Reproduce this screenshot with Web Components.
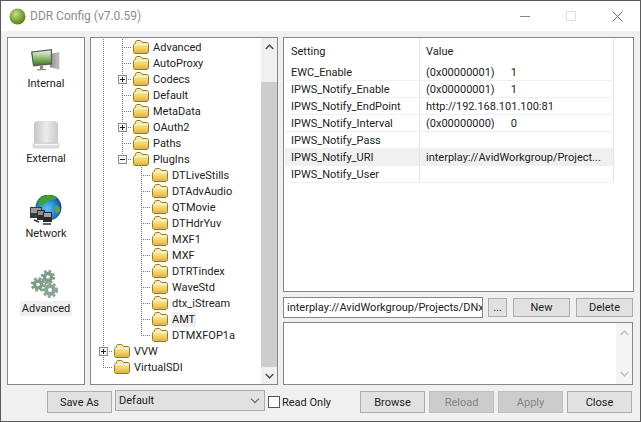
<!DOCTYPE html>
<html>
<head>
<meta charset="utf-8">
<title>DDR Config</title>
<style>
html, body{ margin: 0; padding: 0; background: #5a5a5a; }
body{ font: 11px Roboto, "Noto Sans", sans-serif; color: #222; }
</style>
</head>
<body>
<ddr-window>
	<ddr-titlebar slot="title" text="DDR Config (v7.0.59)"></ddr-titlebar>

	<ddr-panel slot="nav" style="width:78px">
		<ddr-nav>
			<ddr-nav-item label="Internal" icon="internal"></ddr-nav-item>
			<ddr-nav-item label="External" icon="external"></ddr-nav-item>
			<ddr-nav-item label="Network" icon="network"></ddr-nav-item>
			<ddr-nav-item label="Advanced" icon="advanced" selected></ddr-nav-item>
		</ddr-nav>
	</ddr-panel>

	<ddr-panel slot="tree" style="width:188px">
		<ddr-tree>
			<ddr-tree-row guides="v t" label="Advanced"></ddr-tree-row>
			<ddr-tree-row guides="v t" label="AutoProxy"></ddr-tree-row>
			<ddr-tree-row guides="v t" expander="plus" label="Codecs"></ddr-tree-row>
			<ddr-tree-row guides="v t" label="Default"></ddr-tree-row>
			<ddr-tree-row guides="v t" label="MetaData"></ddr-tree-row>
			<ddr-tree-row guides="v t" expander="plus" label="OAuth2"></ddr-tree-row>
			<ddr-tree-row guides="v t" label="Paths"></ddr-tree-row>
			<ddr-tree-row guides="v l" expander="minus" label="PlugIns"></ddr-tree-row>
			<ddr-tree-row guides="v _ t" label="DTLiveStills"></ddr-tree-row>
			<ddr-tree-row guides="v _ t" label="DTAdvAudio"></ddr-tree-row>
			<ddr-tree-row guides="v _ t" label="QTMovie"></ddr-tree-row>
			<ddr-tree-row guides="v _ t" label="DTHdrYuv"></ddr-tree-row>
			<ddr-tree-row guides="v _ t" label="MXF1"></ddr-tree-row>
			<ddr-tree-row guides="v _ t" label="MXF"></ddr-tree-row>
			<ddr-tree-row guides="v _ t" label="DTRTindex"></ddr-tree-row>
			<ddr-tree-row guides="v _ t" label="WaveStd"></ddr-tree-row>
			<ddr-tree-row guides="v _ t" label="dtx_iStream"></ddr-tree-row>
			<ddr-tree-row guides="v _ t" label="AMT" selected></ddr-tree-row>
			<ddr-tree-row guides="v _ l" label="DTMXFOP1a"></ddr-tree-row>
			<ddr-tree-row guides="t" expander="plus" label="VVW"></ddr-tree-row>
			<ddr-tree-row guides="l" label="VirtualSDI"></ddr-tree-row>
		</ddr-tree>
		<ddr-scrollbar top="27"></ddr-scrollbar>
	</ddr-panel>

	<ddr-settings slot="settings">
		<ddr-panel style="height:255px">
			<ddr-list>
				<ddr-list-row header name="Setting" value="Value"></ddr-list-row>
				<ddr-list-row name="EWC_Enable" value="(0x00000001)" extra="1"></ddr-list-row>
				<ddr-list-row name="IPWS_Notify_Enable" value="(0x00000001)" extra="1"></ddr-list-row>
				<ddr-list-row name="IPWS_Notify_EndPoint" value="http://192.168.101.100:81"></ddr-list-row>
				<ddr-list-row name="IPWS_Notify_Interval" value="(0x00000000)" extra="0"></ddr-list-row>
				<ddr-list-row name="IPWS_Notify_Pass" value=""></ddr-list-row>
				<ddr-list-row selected name="IPWS_Notify_URI" value="interplay://AvidWorkgroup/Project..."></ddr-list-row>
				<ddr-list-row name="IPWS_Notify_User" value=""></ddr-list-row>
			</ddr-list>
		</ddr-panel>
		<ddr-edit-row text="interplay://AvidWorkgroup/Projects/DNx">
			<ddr-button style="width:19px;height:19px;margin-left:5px">...</ddr-button>
			<ddr-button style="width:57px;height:19px;margin-left:6px">New</ddr-button>
			<ddr-button style="width:57px;height:19px;margin-left:6px">Delete</ddr-button>
		</ddr-edit-row>
		<ddr-panel style="flex:1;margin-right:1px">
			<div style="flex:1"></div>
			<ddr-scrollbar faded></ddr-scrollbar>
		</ddr-panel>
	</ddr-settings>

	<ddr-footer slot="footer">
		<ddr-button style="width:65px;height:22px">Save As</ddr-button>
		<ddr-combo text="Default"></ddr-combo>
		<ddr-check text="Read Only"></ddr-check>
		<ddr-button style="width:65px;height:22px;margin-left:auto">Browse</ddr-button>
		<ddr-button style="width:65px;height:22px;margin-left:4px" disabled>Reload</ddr-button>
		<ddr-button style="width:65px;height:22px;margin-left:4px" disabled>Apply</ddr-button>
		<ddr-button style="width:65px;height:22px;margin-left:4px">Close</ddr-button>
	</ddr-footer>
</ddr-window>

<script>
// small helper, every element below is a shadow root + some markup
function shadow(el, html){
	el.attachShadow({mode: 'open'});
	el.shadowRoot.innerHTML = html;
}

class DdrWindow extends HTMLElement{
	constructor(){
		super();
		shadow(this, `
		<style>
		:host{
			display: flex;
			flex-direction: column;
			box-sizing: border-box;
			width: 639px;
			height: 420px;
			margin: 1px 1px 0;
			background: #f0f0f0;
		}
		.main{
			display: flex;
			gap: 5px;
			height: 348px;
			padding: 6px 6px 0;
		}
		</style>
		<slot name="title"></slot>
		<div class="main">
			<slot name="nav"></slot>
			<slot name="tree"></slot>
			<slot name="settings"></slot>
		</div>
		<slot name="footer"></slot>`);
	}
}

class DdrTitlebar extends HTMLElement{
	constructor(){
		super();
		shadow(this, `
		<style>
		:host{
			display: flex;
			align-items: center;
			height: 30px;
			flex: none;
			background: #fff;
			padding-left: 8px;
		}
		svg{ display: block; flex: none; }
		.text{
			margin-left: 4px;
			font: 12px Roboto, sans-serif;
			color: #8c8c8c;
			flex: 1;
		}
		.ctl{ margin-right: 36px; }
		.ctl:last-child{ margin-right: 17px; }
		</style>
		<svg width="17" height="17" viewBox="0 0 17 17">
			<defs><radialGradient id="g" cx=".4" cy=".35" r=".7">
				<stop offset="0" stop-color="#c9d9a8"/><stop offset=".45" stop-color="#8fb23f"/><stop offset="1" stop-color="#4f7a1a"/>
			</radialGradient></defs>
			<circle cx="8.5" cy="8.5" r="8" fill="url(#g)"/>
		</svg>
		<div class="text">${this.getAttribute('text')}</div>
		<svg class="ctl" width="10" height="10" viewBox="0 0 10 10"><path d="M0 5.5H10" stroke="#8a8a8a"/></svg>
		<svg class="ctl" width="10" height="10" viewBox="0 0 10 10"><rect x=".5" y=".5" width="9" height="9" fill="none" stroke="#e0e0e0"/></svg>
		<svg class="ctl" width="11" height="11" viewBox="0 0 11 11"><path d="M.5 .5L10.5 10.5M10.5 .5L.5 10.5" stroke="#6a6a6a"/></svg>`);
	}
}

class DdrPanel extends HTMLElement{
	constructor(){
		super();
		shadow(this, `
		<style>
		:host{
			display: flex;
			box-sizing: border-box;
			border: 1px solid #828790;
			background: #fff;
			overflow: hidden;
			height: 100%;
		}
		</style>
		<slot></slot>`);
	}
}

class DdrNav extends HTMLElement{
	constructor(){
		super();
		shadow(this, `
		<style>
		:host{
			display: flex;
			flex-direction: column;
			align-items: center;
			width: 100%;
			padding-top: 7px;
		}
		</style>
		<slot></slot>`);
	}
}

const NAV_ICONS = {
	internal: `
		<defs><linearGradient id="land" x1="0" y1="0" x2="0" y2="1">
			<stop offset="0" stop-color="#e8efec"/><stop offset=".4" stop-color="#a9c98e"/><stop offset="1" stop-color="#3f7f1c"/>
		</linearGradient>
		<linearGradient id="side" x1="0" y1="0" x2="1" y2="0">
			<stop offset="0" stop-color="#8c8c8c"/><stop offset="1" stop-color="#c4c4c4"/>
		</linearGradient></defs>
		<path d="M20 9L29 7.5V24L20 22Z" fill="url(#side)" stroke="#999" stroke-width=".5"/>
		<path d="M1 6.5L22 4V19.5L3 21.5Z" fill="#5a5f5a"/>
		<path d="M2.5 7.5L20.8 5.4V18.3L4 20Z" fill="url(#land)"/>
		<path d="M10 21L13 21V24H10Z" fill="#888"/><path d="M7 25L16 24.5" stroke="#777" stroke-width="1.2"/>`,
	external: `
		<defs><linearGradient id="drv" x1="0" y1="0" x2="1" y2="0">
			<stop offset="0" stop-color="#c6c6c6"/><stop offset=".5" stop-color="#ebebeb"/><stop offset="1" stop-color="#cbcbcb"/>
		</linearGradient></defs>
		<rect x="4" y="1" width="24" height="24" rx="4" fill="url(#drv)"/>
		<rect x="3" y="23" width="26" height="5" rx="1.5" fill="#dedede" stroke="#bdbdbd" stroke-width=".5"/>
		<path d="M4 24.5H28" stroke="#f7f7f7"/>`,
	network: `
		<defs><radialGradient id="globe" cx=".45" cy=".55" r=".6">
			<stop offset="0" stop-color="#5fc4f5"/><stop offset=".7" stop-color="#1c78c8"/><stop offset="1" stop-color="#0c3f7e"/>
		</radialGradient></defs>
		<circle cx="18.5" cy="12.5" r="13" fill="url(#globe)"/>
		<path d="M10 4C14 -1 22 -1 27 3C24 6 19 4 17 7C15 10 11 8 10 12C8 10 8 6 10 4Z" fill="#43a02f"/>
		<path d="M25 11C28 10 30 12 30 15C29 19 26 19 25 16Z" fill="#5aa83b"/>
		<rect x="0" y="12" width="12" height="11" fill="#3a3a3a"/>
		<rect x="1" y="13" width="10" height="5" fill="#9a9a9a"/>
		<rect x="7" y="15" width="8" height="10" fill="#2e2e2e"/>
		<rect x="8" y="16" width="6" height="4" fill="#8e8e8e"/>
		<rect x="13" y="17" width="9" height="10" fill="#2a2a2a"/>
		<rect x="14" y="18" width="7" height="4" fill="#a2a2a2"/>
		<path d="M4 25L9 27M13 29H21" stroke="#333" stroke-width="1.5"/>`,
	advanced: `
		<g fill="none" stroke="#7f9c88">
			<circle cx="18" cy="7" r="3.5" stroke-width="3.4"/>
			<circle cx="18" cy="7" r="6" stroke-width="2.4" stroke-dasharray="2.6 2.1"/>
			<circle cx="8" cy="14.5" r="3.5" stroke-width="3.4"/>
			<circle cx="8" cy="14.5" r="6" stroke-width="2.4" stroke-dasharray="2.6 2.1"/>
			<circle cx="20" cy="20" r="4" stroke-width="4" stroke="#8aa692"/>
			<circle cx="20" cy="20" r="6.8" stroke-width="2.4" stroke-dasharray="2.8 2.2" stroke="#8aa692"/>
		</g>`
};

class DdrNavItem extends HTMLElement{
	constructor(){
		super();
		const sel = this.hasAttribute('selected');
		shadow(this, `
		<style>
		:host{
			display: flex;
			flex-direction: column;
			align-items: center;
			height: 75px;
			flex: none;
		}
		svg{ display: block; flex: none; }
		span{
			line-height: 15px;
			padding: 0 2px;
			margin-top: -1px;
			background: ${sel ? '#f0f0f0' : 'transparent'};
		}
		</style>
		<svg width="32" height="32" viewBox="0 0 32 32">${NAV_ICONS[this.getAttribute('icon')]}</svg>
		<span>${this.getAttribute('label')}</span>`);
	}
}

class DdrTree extends HTMLElement{
	constructor(){
		super();
		shadow(this, `
		<style>
		:host{
			display: block;
			flex: 1;
			padding: 1px 0 0 3px;
			overflow: hidden;
		}
		</style>
		<slot></slot>`);
	}
}

class DdrFolder extends HTMLElement{
	constructor(){
		super();
		shadow(this, `
		<style>
		:host{ display: block; width: 16px; height: 14px; flex: none; }
		svg{ display: block; }
		</style>
		<svg width="16" height="14" viewBox="0 0 16 14">
			<defs><linearGradient id="f" x1="0" y1="0" x2="0" y2="1">
				<stop offset="0" stop-color="#fff3b8"/><stop offset=".55" stop-color="#f6d66e"/><stop offset="1" stop-color="#e0ae3a"/>
			</linearGradient></defs>
			<path d="M2.5 2.5C2.5 1 3.5 .5 5 .5H7.5L9.5 2.5H13C14.5 2.5 15.5 3 15.5 4.5V11.5C15.5 13 14.5 13.5 13 13.5H3C1.5 13.5 .5 13 .5 11.5V5.5C.5 4 1.5 3.5 2.5 3.5Z" fill="url(#f)" stroke="#8f7a2e" stroke-linejoin="round"/>
			<path d="M1.5 4.5H14.5" stroke="#fffbe0"/>
		</svg>`);
	}
}

// dotted guide column, one per tree level
const DOT_V = 'repeating-linear-gradient(to bottom,#777 0 1px,transparent 1px 2px)';
const DOT_H = 'repeating-linear-gradient(to right,#777 0 1px,transparent 1px 2px)';
const GUIDE = {
	v: `background:${DOT_V} 9px 0/1px 16px no-repeat`,
	t: `background:${DOT_V} 9px 0/1px 16px no-repeat,${DOT_H} 9px 8px/10px 1px no-repeat`,
	l: `background:${DOT_V} 9px 0/1px 8px no-repeat,${DOT_H} 9px 8px/10px 1px no-repeat`,
	_: ''
};

class DdrTreeRow extends HTMLElement{
	constructor(){
		super();
		const guides = this.getAttribute('guides').split(' ');
		const exp = this.getAttribute('expander');
		const cells = guides.map((g, i) => {
			let box = '';
			if(exp && i === guides.length - 1){
				box = `<svg width="9" height="9" viewBox="0 0 9 9"><rect x=".5" y=".5" width="8" height="8" fill="#f4f4f4" stroke="#8b8b8b"/><path d="${exp === 'plus' ? 'M2 4.5H7M4.5 2V7' : 'M2 4.5H7'}" stroke="#222"/></svg>`;
			}
			return `<div class="g" style="${GUIDE[g]}">${box}</div>`;
		}).join('');
		shadow(this, `
		<style>
		:host{
			display: flex;
			align-items: center;
			height: 16px;
		}
		.g{
			width: 19px;
			height: 16px;
			flex: none;
			padding: 4px 0 0 5px;
			box-sizing: border-box;
		}
		svg{ display: block; }
		ddr-folder{ margin-left: 1px; }
		span{
			margin-left: 3px;
			padding: 0 1px;
			line-height: 15px;
			white-space: nowrap;
			background: ${this.hasAttribute('selected') ? '#f0f0f0' : 'transparent'};
		}
		</style>
		${cells}<ddr-folder></ddr-folder><span>${this.getAttribute('label')}</span>`);
	}
}

class DdrScrollbar extends HTMLElement{
	constructor(){
		super();
		const faded = this.hasAttribute('faded');
		const top = this.getAttribute('top');
		const arrow = faded ? '#c4c4c4' : '#555';
		const thumb = top === null ? '' : `<div style="height:${top}px"></div><div class="thumb"></div>`;
		shadow(this, `
		<style>
		:host{
			display: flex;
			flex-direction: column;
			width: 16px;
			flex: none;
			background: ${faded ? '#f5f5f5' : '#f0f0f0'};
		}
		.btn{ height: ${faded ? 20 : 17}px; flex: none; display: flex; align-items: center; justify-content: center; box-sizing: border-box; }
		.btn:first-child{ padding-top: 1px; }
		.mid{ flex: 1; display: flex; flex-direction: column; }
		.thumb{ flex: 1; background: #cdcdcd; }
		svg{ display: block; }
		</style>
		<div class="btn"><svg width="9" height="6" viewBox="0 0 9 6"><path d="M.7 5L4.5 1.2L8.3 5" fill="none" stroke="${arrow}" stroke-width="1.6"/></svg></div>
		<div class="mid">${thumb}</div>
		<div class="btn"><svg width="9" height="6" viewBox="0 0 9 6"><path d="M.7 1L4.5 4.8L8.3 1" fill="none" stroke="${arrow}" stroke-width="1.6"/></svg></div>`);
	}
}

class DdrSettings extends HTMLElement{
	constructor(){
		super();
		shadow(this, `
		<style>
		:host{
			display: flex;
			flex-direction: column;
			width: 351px;
			height: 100%;
			flex: none;
		}
		</style>
		<slot></slot>`);
	}
}

class DdrList extends HTMLElement{
	constructor(){
		super();
		shadow(this, `
		<style>
		:host{ display: block; flex: 1; padding: 0 0 0 1px; }
		</style>
		<slot></slot>`);
	}
}

class DdrListRow extends HTMLElement{
	constructor(){
		super();
		const header = this.hasAttribute('header');
		const extra = this.getAttribute('extra');
		shadow(this, `
		<style>
		:host{
			display: grid;
			grid-template-columns: 135px 194px;
			width: 329px;
			height: ${header ? 26 : 17}px;
			line-height: ${header ? 26 : 16}px;
			box-sizing: border-box;
			border-bottom: ${header ? 0 : 1}px solid #f0f0f0;
			background: ${this.hasAttribute('selected') ? '#f0f0f0' : 'transparent'};
			white-space: nowrap;
		}
		div{
			padding: 1px 0 0 6px;
			border-right: 1px solid #e6e6e6;
			box-sizing: border-box;
			overflow: hidden;
		}
		b{ font-weight: normal; margin-left: 16px; }
		</style>
		<div>${this.getAttribute('name')}</div>
		<div>${this.getAttribute('value')}${extra ? `<b>${extra}</b>` : ''}</div>`);
	}
}

class DdrEditRow extends HTMLElement{
	constructor(){
		super();
		shadow(this, `
		<style>
		:host{
			display: flex;
			align-items: center;
			box-sizing: border-box;
			height: 30px;
			padding: 5px 0 4px;
			flex: none;
		}
		.in{
			width: 200px;
			height: 21px;
			box-sizing: border-box;
			border: 1px solid #828790;
			background: #fff;
			padding-left: 3px;
			line-height: 19px;
			white-space: nowrap;
			overflow: hidden;
			flex: none;
		}
		</style>
		<div class="in">${this.getAttribute('text')}</div>
		<slot></slot>`);
	}
}

class DdrButton extends HTMLElement{
	constructor(){
		super();
		const off = this.hasAttribute('disabled');
		shadow(this, `
		<style>
		:host{
			display: flex;
			align-items: center;
			justify-content: center;
			box-sizing: border-box;
			flex: none;
			border: 1px solid ${off ? '#bfbfbf' : '#adadad'};
			background: ${off ? '#cccccc' : '#e1e1e1'};
			color: ${off ? '#848484' : '#222'};
		}
		</style>
		<slot></slot>`);
	}
}

class DdrCombo extends HTMLElement{
	constructor(){
		super();
		shadow(this, `
		<style>
		:host{
			display: flex;
			align-items: center;
			justify-content: space-between;
			box-sizing: border-box;
			width: 150px;
			height: 21px;
			margin: -1px 0 0 3px;
			padding: 0 4px 0 3px;
			border: 1px solid #adadad;
			background: #e1e1e1;
			flex: none;
		}
		svg{ display: block; }
		</style>
		<span>${this.getAttribute('text')}</span>
		<svg width="10" height="6" viewBox="0 0 10 6"><path d="M1 .7L5 4.7L9 .7" fill="none" stroke="#666" stroke-width="1.2"/></svg>`);
	}
}

class DdrCheck extends HTMLElement{
	constructor(){
		super();
		shadow(this, `
		<style>
		:host{
			display: flex;
			align-items: center;
			height: 22px;
			margin-left: 3px;
			flex: none;
		}
		i{
			display: block;
			box-sizing: border-box;
			width: 12px;
			height: 12px;
			border: 1px solid #555;
			background: #fff;
			margin-right: 2px;
		}
		</style>
		<i></i><span>${this.getAttribute('text')}</span>`);
	}
}

class DdrFooter extends HTMLElement{
	constructor(){
		super();
		shadow(this, `
		<style>
		:host{
			display: flex;
			align-items: flex-start;
			padding: 6px 8px 0 46px;
		}
		</style>
		<slot></slot>`);
	}
}

const elements = {
	'ddr-window': DdrWindow, 'ddr-titlebar': DdrTitlebar, 'ddr-panel': DdrPanel, 'ddr-nav': DdrNav,
	'ddr-nav-item': DdrNavItem, 'ddr-tree': DdrTree, 'ddr-folder': DdrFolder, 'ddr-tree-row': DdrTreeRow,
	'ddr-scrollbar': DdrScrollbar, 'ddr-settings': DdrSettings, 'ddr-list': DdrList, 'ddr-list-row': DdrListRow,
	'ddr-edit-row': DdrEditRow, 'ddr-button': DdrButton, 'ddr-combo': DdrCombo, 'ddr-check': DdrCheck,
	'ddr-footer': DdrFooter
};
for(const name in elements){
	customElements.define(name, elements[name]);
}
</script>
</body>
</html>
